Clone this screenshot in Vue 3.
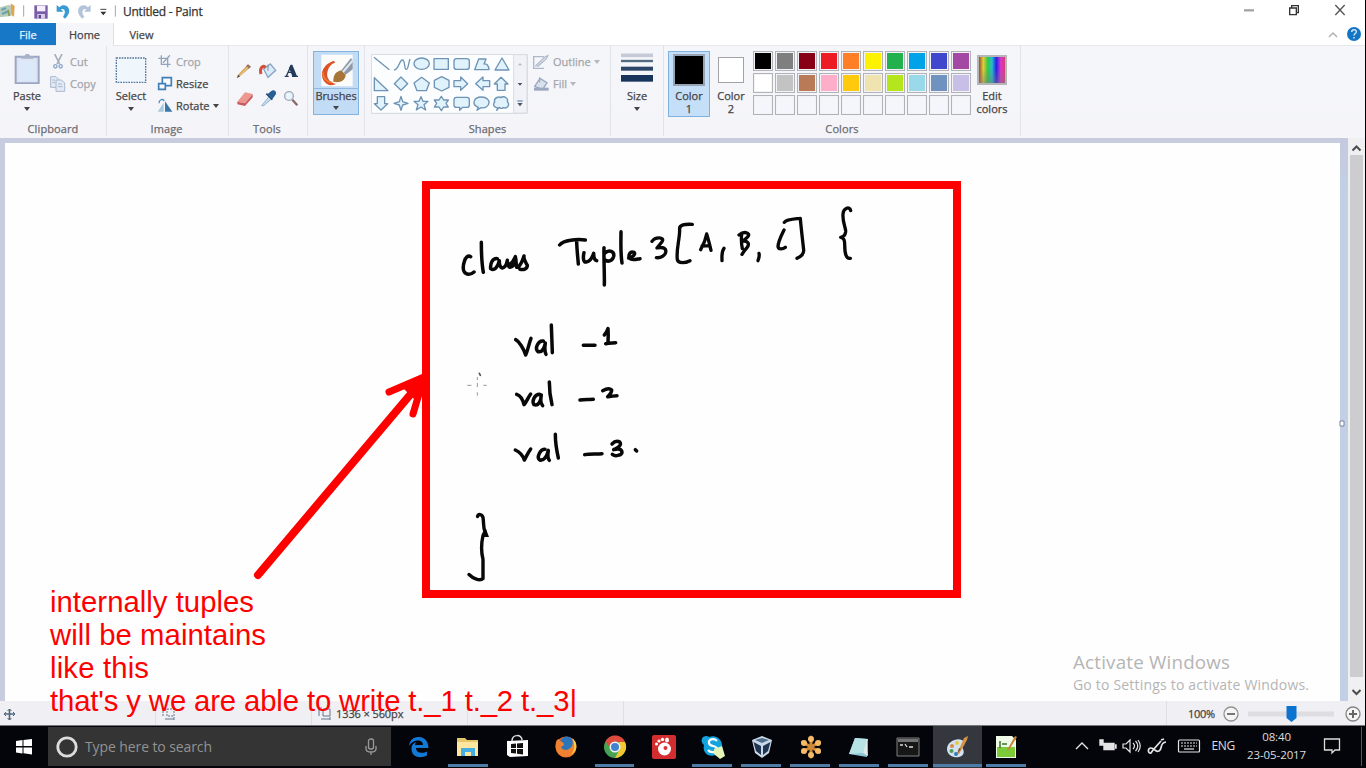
<script setup>
const row1 = ['#000000', '#7f7f7f', '#880015', '#ed1c24', '#ff7f27', '#fff200', '#22b14c', '#00a2e8', '#3f48cc', '#a349a4']
const row2 = ['#ffffff', '#c3c3c3', '#b97a57', '#ffaec9', '#ffc90e', '#efe4b0', '#b5e61d', '#99d9ea', '#7092be', '#c8bfe7']
const swatches = [...row1, ...row2, ...Array(10).fill('#f5f6fb')]
const apps = [
  { id: 'edge' }, { id: 'explorer', open: true }, { id: 'store' }, { id: 'firefox' },
  { id: 'chrome', open: true }, { id: 'gom' }, { id: 'skype', open: true }, { id: 'vbox', open: true },
  { id: 'flower', open: true }, { id: 'notepad', open: true }, { id: 'cmd', open: true },
  { id: 'paint', open: true, active: true }, { id: 'npp', open: true }
]
</script>

<template>
  <div class="screen">
    <header class="titlebar">
      <svg class="quick" width="120" height="23" viewBox="0 0 360 69">
        <path d="M0 22l28-8 12 10-8 24-32 4z" fill="#b9cbb9" /><path d="M4 30l14-6M6 42l18-8" stroke="#6ba3b5" stroke-width="7" /><path d="M32 10l12 8-2 32-8-4z" fill="#e0a552" /><path d="M24 30l4 18" stroke="#8c9a52" stroke-width="5" />
        <path d="M71 16v34" stroke="#a6a6a6" stroke-width="3" />
        <path d="M103 16h40v40h-40z" fill="#7b5ca8" /><path d="M111 17h25v17h-25z" fill="#f5effb" /><path d="M112 42h23v14h-23z" fill="#d8cde6" /><path d="M116 45h7v10h-7z" fill="#5f4590" />
        <path d="M170 15v20h20l-7-7c12-4 16 10 6 22l6 6c20-16 16-42-8-40l-9 6z" fill="#3a9ad4" />
        <path d="M272 15v20h-20l7-7c-12-4-16 10-6 22l-6 6c-20-16-16-42 8-40l9 6z" fill="#b4c4d8" />
        <path d="M301 28h18" stroke="#444" stroke-width="3" /><path d="M301 35h18l-9 11z" fill="#333" />
        <path d="M346 16v34" stroke="#a6a6a6" stroke-width="3" />
      </svg>
      <span class="title">Untitled - Paint</span>
      <svg class="winctl" width="125" height="23" viewBox="0 0 375 69" fill="none">
        <path d="M12 31h30" stroke="#a5a5a5" stroke-width="7" />
        <path d="M149 24h20v20h-20zM155 23v-6h20v21h-6" stroke="#333" stroke-width="4" />
        <path d="M286 15l28 30M314 15l-28 30" stroke="#555" stroke-width="4" />
      </svg>
    </header>
    <nav class="tabs">
      <span class="tab file">File</span><span class="tab home">Home</span><span class="tab view">View</span>
      <svg class="help" width="40" height="22" viewBox="0 0 40 22"><path d="M3 14l4-4 4 4" fill="none" stroke="#b2b2b2" stroke-width="1.5" /><circle cx="28" cy="11" r="7" fill="#1475c5" /><path d="M25.7 9c0-3 5-3 4.600 0-.2 1.500-2.300 1.600-2.300 3.500M28 14v1.500" fill="none" stroke="#c9e6fb" stroke-width="1.500" /></svg>
    </nav>

    <section class="ribbon">
      <div class="group clip">
        <div class="body">
          <div class="big paste">
            <svg width="26" height="32" viewBox="42 156 78 96"><path d="M47 170h69v80H47z" fill="#dce4f2" stroke="#9ba7c2" stroke-width="6" /><path d="M56 182h50v60H56z" fill="#dce9f8" /><path d="M64 176v-8h10c0-8 16-8 16 0h10v8z" fill="#a8b2c8" /></svg>
            <span class="t">Paste</span><i class="arr"></i>
          </div>
          <div class="rows">
            <div class="row dim"><svg width="16" height="16" viewBox="152 162 48 48" fill="none"><path d="M166 162l15 30M188 162l-15 30" stroke="#a3adba" stroke-width="5" /><circle cx="168" cy="199" r="5" stroke="#8ca6c9" stroke-width="4" /><circle cx="184" cy="199" r="5" stroke="#8ca6c9" stroke-width="4" /></svg><span>Cut</span></div>
            <div class="row dim"><svg width="16" height="16" viewBox="152 228 48 48" fill="#e4eaf5" stroke="#a9b8cf" stroke-width="3"><path d="M154 230h16l8 8v24h-24z" /><path d="M170 240h17l9 9v25h-26z" /><path d="M176 252h12M176 260h14M159 240h8M159 248h8" /></svg><span>Copy</span></div>
          </div>
        </div>
        <div class="name">Clipboard</div>
      </div>

      <div class="group image">
        <div class="body">
          <div class="big select">
            <svg width="32" height="32" viewBox="348 156 96 96"><path d="M352 174h88v73h-88z" fill="#eff6fc" stroke="#55779b" stroke-width="4" stroke-dasharray="5 3" /></svg>
            <span class="t">Select</span><i class="arr"></i>
          </div>
          <div class="rows">
            <div class="row dim"><svg width="16" height="16" viewBox="470 162 48 48" fill="none" stroke="#92a5be" stroke-width="4"><path d="M474 175h28v27M483 166v27h28M488 188l21-22" /></svg><span>Crop</span></div>
            <div class="row"><svg width="16" height="16" viewBox="470 228 48 48" fill="#f5fbff" stroke="#407fb5" stroke-width="5"><path d="M486 233h27v24h-27z" /><path d="M475 251h20v17h-20z" /></svg><span>Resize</span></div>
            <div class="row"><svg width="16" height="16" viewBox="470 294 48 48"><path d="M494 304v31h22z" fill="#3777a9" /><path d="M490 308v27h-18z" fill="#a8c9de" /><path d="M476 310c0-12 10-14 16-8" fill="none" stroke="#4592be" stroke-width="4" /></svg><span>Rotate</span><i class="arr"></i></div>
          </div>
        </div>
        <div class="name">Image</div>
      </div>

      <div class="group tools">
        <div class="body">
          <svg width="64" height="48" viewBox="708 186 192 144">
            <path d="M713 226l31-33 9 7-33 29-10 5z" fill="#d7a354" /><path d="M744 193l9 7-7 6-8-7z" fill="#9a7670" /><path d="M711 234l4-9 5 4z" fill="#48443d" /><path d="M720 226l23-24" stroke="#f1d69c" stroke-width="3" />
            <path d="M791 207l20-15 16 19-23 21z" fill="#d9eafb" stroke="#8ba6c6" stroke-width="4" /><path d="M783 222c-5-19 5-27 14-20" fill="none" stroke="#d35036" stroke-width="9" /><path d="M804 194v18" stroke="#7889a3" stroke-width="3" />
            <path d="M854 229h12M876 229h18M859 229l14-32M864 217h18" fill="none" stroke="#263c57" stroke-width="4" /><path d="M872 194h5l14 35h-14l-10-25z" fill="#213b59" />
            <path d="M712 305l23-28 23 5-23 28z" fill="#ed9791" /><path d="M712 305l23 5 23-28v10l-23 26-23-5z" fill="#c95b5c" />
            <path d="M785 317l25-31 8 8-27 23z" fill="#c2dff2" stroke="#7797b3" stroke-width="2" /><path d="M803 282l15 14 10-14c2-9-8-15-15-8z" fill="#285d95" /><path d="M799 281l18 18" stroke="#214977" stroke-width="5" />
            <circle cx="867" cy="288" r="13" fill="#e8f5fe" stroke="#9da7b4" stroke-width="4" /><path d="M877 299l15 17" stroke="#8b6864" stroke-width="7" />
          </svg>
        </div>
        <div class="name">Tools</div>
      </div>

      <div class="group brush">
        <div class="active-btn">
          <svg width="45" height="36" viewBox="39 18 135 108"><path d="M61 26h94v95H61z" fill="#fbfbfa" /><path d="M99 44C65 55 53 86 72 109c10 12 25 9 33 5-20-4-31-20-25-39 3-13 11-22 22-25z" fill="#dc5126" /><path d="M65 79c2 17 12 29 29 31" fill="none" stroke="#f27a38" stroke-width="5" /><path d="M97 107c-1-22 10-31 24-34l13 13c-1 18-19 26-37 21z" fill="#a87538" /><path d="M121 73l29-37 5 8v26l-21 16z" fill="#8e9aaa" /><path d="M126 78l29-34" stroke="#e3e7eb" stroke-width="6" /></svg>
          <span class="t">Brushes</span><i class="arr"></i>
        </div>
      </div>

      <div class="group shapes">
        <div class="body">
          <svg width="157" height="60" viewBox="213 27 471 180" fill="#e0f2fb" stroke="#6f93b4" stroke-width="4" stroke-linejoin="round">
            <path d="M214 28h468v177H214z" fill="#fcfdff" stroke="#d2d7df" stroke-width="3" /><path d="M641 29h40v175h-40z" fill="#f1f2f7" stroke="#d9dce3" stroke-width="3" />
            <path d="M222 37l46 37" /><path d="M282 75c15-2 16-30 25-30 10 0 4 28 12 28 6 0 7-22 11-31" fill="none" />
            <ellipse cx="365" cy="56" rx="23" ry="17" /><path d="M402 41h43v32h-43z" /><rect x="462" y="41" width="46" height="32" rx="8" />
            <path d="M524 74l12-32h22l-6 15c8-1 14 3 15 17z" /><path d="M606 39l21 36h-42z" />
            <path d="M223 98v39h41z" /><path d="M303 96l20 20-20 20-20-20z" /><path d="M365 97l23 17-9 23h-28l-9-23z" /><path d="M425 95l22 11v21l-22 11-22-11v-21z" />
            <path d="M462 107h20V96l21 20-21 20v-11h-20z" /><path d="M569 107h-20V96l-22 20 22 20v-11h20z" /><path d="M603 97l21 20h-9v19h-23v-19h-9z" />
            <path d="M232 155h22v21h9l-20 19-20-19h9z" /><path d="M303 154l5 16 16 5-16 5-5 16-5-16-16-5 16-5z" />
            <path d="M363 155l6 14h15l-12 10 5 16-14-9-14 9 5-16-12-10h15z" /><path d="M424 154l7 11h14l-7 10 7 11h-14l-7 11-7-11h-14l7-11-7-10h14z" />
            <path d="M469 157h32q7 0 7 8v14q0 8-7 8h-13l-9 9v-9h-10q-7 0-7-8v-14q0-8 7-8z" /><path d="M535 187c-22-8-14-31 9-31 34 0 28 37-2 32l-11 8z" /><path d="M594 189c-20-4-12-16-10-17-4-17 16-17 18-14 12-8 24 4 20 12 9 9 0 22-12 18-5 3-10 2-12-1l-8 9z" />
            <path d="M654 61h12l-6-7z" fill="#aeb5bf" stroke="none" /><path d="M653 114h14l-7 8zM652 174h16l-8 10z" fill="#4b5360" stroke="none" /><path d="M652 168h16" />
          </svg>
          <div class="rows">
            <div class="row dim"><svg width="16" height="16" viewBox="700 29 48 48" fill="none" stroke="#aeb8c9" stroke-width="4"><path d="M733 37h-31v35h31M707 66l29-28 8-4-4 9-27 24" /></svg><span>Outline</span><i class="arr"></i></div>
            <div class="row dim"><svg width="16" height="16" viewBox="700 95 48 48"><path d="M705 126l16-24 21 13-13 20z" fill="#d8e0ec" stroke="#9ba8c1" stroke-width="4" /><path d="M703 130h44v9h-44z" fill="#9ba9bf" /><path d="M720 115V98" stroke="#9ba8c1" stroke-width="3" /></svg><span>Fill</span><i class="arr"></i></div>
          </div>
        </div>
        <div class="name">Shapes</div>
      </div>

      <div class="group size">
        <div class="big">
          <svg width="34" height="34" viewBox="59 21 102 102"><path d="M62 31h96" stroke="#c5cad6" stroke-width="11" /><path d="M62 48h96" stroke="#536b80" stroke-width="7" /><path d="M62 71h96" stroke="#2c4668" stroke-width="12" /><path d="M62 100h96" stroke="#19345a" stroke-width="20" /></svg>
          <span class="t">Size</span><i class="arr"></i>
        </div>
      </div>

      <div class="group colors">
        <div class="body">
          <div class="col one"><b class="chip black"></b><span class="t">Color</span><span class="t two">1</span></div>
          <div class="col"><b class="chip"></b><span class="t">Color</span><span class="t two">2</span></div>
          <div class="palette"><i v-for="(c, i) in swatches" :key="i" :style="{ background: c }"></i></div>
          <div class="col edit"><b class="rainbow"></b><span class="t">Edit</span><span class="t two">colors</span></div>
        </div>
        <div class="name">Colors</div>
      </div>
    </section>

    <main class="work">
      <div class="paper"></div><div class="gutter"></div>
      <div class="scroll">
        <svg width="16" height="12" viewBox="0 0 16 12"><path d="M4.500 8.500l4-4 4 4" fill="none" stroke="#4c4c4c" stroke-width="2" /></svg>
        <div class="thumb"></div>
        <svg width="16" height="24" viewBox="0 0 16 24"><path d="M4.500 13l4 4 4-4" fill="none" stroke="#4c4c4c" stroke-width="2" /></svg>
      </div>
    </main>

    <footer class="status">
      <div class="cell c0"><svg width="14" height="14" viewBox="0 0 14 14" stroke="#51677c" fill="none"><path d="M2 7h11M7.500 2v11" stroke-width="1.600" /><path d="M4 5L2 7l2 2M11 5l2 2-2 2M5.500 4l2-2 2 2M5.500 11l2 2 2-2" /></svg></div>
      <div class="cell"><svg width="14" height="14" viewBox="0 0 14 14" stroke="#60768f" fill="none"><path d="M1 9V1M1 1h3M5 2h7v7H5z" stroke-dasharray="2 1" /><path d="M3 12h9M12 10v3" /></svg></div>
      <div class="cell"><svg width="14" height="14" viewBox="0 0 14 14" stroke="#60768f" fill="none"><path d="M1 9V1M1 1h3M5 2h7v7H5z" /><path d="M3 12h9M12 10v3" /></svg><span class="dims">1336 × 560px</span></div>
      <div class="cell"></div>
      <div class="cell wide-cell"></div>
      <div class="zoomer">
        <span>100%</span>
        <svg width="142" height="24" viewBox="0 0 142 24"><circle cx="9" cy="12" r="7" fill="#f5f5f5" stroke="#929292" stroke-width="1.300" /><path d="M5 12h8" stroke="#777" stroke-width="2" /><path d="M26 12h86" stroke="#dedee2" stroke-width="5" /><path d="M64.500 4h10v12l-5 4-5-4z" fill="#0b74d1" /><circle cx="131" cy="12" r="7" fill="#f5f5f5" stroke="#858585" stroke-width="1.300" /><path d="M127 12h8M131 8v8" stroke="#666" stroke-width="2" /></svg>
      </div>
    </footer>

    <div class="taskbar">
      <div class="start"><svg width="18" height="18" viewBox="0 0 18 18" fill="#fff"><path d="M1 3l6.500-1v6H1zM8.500 2L17 1v7H8.500zM1 9.500h6.500v6L1 14.500zM8.500 9.500H17v7l-8.500-1.200z" /></svg></div>
      <div class="search">
        <svg width="22" height="22" viewBox="0 0 22 22"><circle cx="11" cy="11" r="9.200" fill="none" stroke="#ddd" stroke-width="2.800" /></svg>
        <span>Type here to search</span>
        <svg class="mic" width="14" height="20" viewBox="0 0 14 20" fill="none" stroke="#999" stroke-width="1.300"><rect x="4.500" y="2" width="5" height="10" rx="2" /><path d="M2 9v3c0 4 10 4 10 0V9M7 15v3" /></svg>
      </div>
      <div class="apps">
        <div v-for="a in apps" :key="a.id" class="app" :class="{ open: a.open, active: a.active }">
          <svg width="26" height="26" viewBox="0 0 26 26">
            <g v-if="a.id === 'edge'"><path d="M3 12C4 5 8 3 13 3c6 0 9.500 5 9.500 11H10c0 5 7 6 11 3.500v4c-7 3.500-15.500 1.500-15.500-6.500 0-4 2-6 5-7-1 1-1.500 2-1.500 3h8c0-6-10-6-14 1z" fill="#1479d4" /></g>
            <g v-else-if="a.id === 'explorer'"><path d="M2 4h8l2 2h11v16H2z" fill="#e7c66b" /><path d="M2 8h21v14H2z" fill="#ffe7a0" /><path d="M6 14h14v8h-4v-4h-6v4H6z" fill="#45aee2" /></g>
            <g v-else-if="a.id === 'store'"><path d="M3 7l21-1v16l-18 1-3-2z" fill="#fff" /><path d="M8 7c0-7 10-7 10-1" fill="none" stroke="#ddd" stroke-width="1.500" /><path d="M7 10l5-.5v4.500H7zM13 9.400l6-.4v5h-6zM7 15h5v4.500L7 19zM13 15h6v5.500l-6-.7z" fill="#111" /></g>
            <g v-else-if="a.id === 'firefox'"><circle cx="13" cy="13" r="10.500" fill="#e86528" /><circle cx="14" cy="10" r="7.500" fill="#2c75b8" /><path d="M3 8c1-3 3-3 3-3 0 3 5 2 5 6l-3 2c2 5 9 3 11-1 2-4 0-7-1-8 8 5 6 19-5 19C6 23 1 16 3 8z" fill="#ef8130" /><path d="M19 4c7 5 5 14-1 17 4-5 4-11 1-17z" fill="#ffc847" /></g>
            <g v-else-if="a.id === 'chrome'"><circle cx="13" cy="13" r="11" fill="#46a353" /><path d="M3.500 7.500C8-1 20 0 23 8H13l-4 7z" fill="#dd4b3e" /><path d="M23 8c4 8-3 16-10 16l5-9-1-7z" fill="#f4c830" /><circle cx="13" cy="13" r="5.500" fill="#f3f3f3" /><circle cx="13" cy="13" r="4" fill="#4283d0" /></g>
            <g v-else-if="a.id === 'gom'"><rect x="1" y="1" width="24" height="24" rx="2" fill="#d42d30" /><ellipse cx="13.500" cy="15" rx="6.500" ry="6.500" fill="#fff" /><g fill="#fff"><circle cx="5.500" cy="10" r="1.500" /><circle cx="8" cy="7" r="1.600" /><circle cx="11.500" cy="5.500" r="1.700" /><ellipse cx="16" cy="6" rx="2" ry="2.600" /></g><circle cx="14.500" cy="14" r="2" fill="#dc3339" /></g>
            <g v-else-if="a.id === 'skype'"><path d="M3 3c4-2 6 0 6 0 8-3 14 4 13 10 3 5-2 9-6 8C8 24 2 18 4 11 1 8 1 6 3 3z" fill="#13a3df" /><path d="M17 7c-3-3-9-2-8 2 0 4 8 2 8 6 0 4-7 4-9 1" fill="none" stroke="#fff" stroke-width="2.300" /><path d="M14 15l8-3 3 10-5 3-6-5z" fill="#e5f5b7" /></g>
            <g v-else-if="a.id === 'vbox'"><path d="M3 6l10-4 10 4-3 13-7 5-7-5z" fill="#cbd8e8" /><path d="M4.500 8l7.500 4v9l-5-4zM21.500 8L14 12v9l5-4z" fill="#1f3551" /><path d="M6 6l7-2 7 2-7 3z" fill="#506d8a" /></g>
            <g v-else-if="a.id === 'flower'"><path d="M13 3v20M4.500 8l17 10M4.500 18l17-10" stroke="#ce8937" stroke-width="3" stroke-linecap="round" /><g fill="#f6ba67"><circle cx="13" cy="5" r="3" /><circle cx="13" cy="21" r="3" /><circle cx="6" cy="9" r="3" /><circle cx="20" cy="9" r="3" /><circle cx="6" cy="17" r="3" /><circle cx="20" cy="17" r="3" /></g></g>
            <g v-else-if="a.id === 'notepad'"><path d="M9 4l13 1-1 18-18-3z" fill="#8cc6d3" /><path d="M9 4l13 1-5 14-14 1z" fill="#b7e3e7" /><path d="M21 5l1 17-5-3z" fill="#e2e9e9" /></g>
            <g v-else-if="a.id === 'cmd'"><path d="M2 4h22v18H2z" fill="#171717" stroke="#808080" /><path d="M3 5h20v3H3z" fill="#747474" /><path d="M5 11h3M10 10l2 3M14 13h4" stroke="#ddd" stroke-width="1.300" /></g>
            <g v-else-if="a.id === 'paint'"><path d="M3 15C3 6 17 2 20 8c2 4-3 4-1 7 3 7-4 9-9 8-4-1-7-4-7-8z" fill="#d3e2ee" /><circle cx="8" cy="12" r="2" fill="#d5894f" /><circle cx="13" cy="9" r="2" fill="#e8c744" /><circle cx="7.500" cy="17" r="2" fill="#4b9c57" /><circle cx="12" cy="20" r="2" fill="#347abc" /><path d="M13 20l7-16 4-2-1 4-8 14z" fill="#d69442" /><path d="M13 20l2-6 2 1z" fill="#7b533c" /></g>
            <g v-else><path d="M3 2h16l4 4v18H3z" fill="#effbe8" /><path d="M4 13h18v10H4z" fill="#7dcb39" /><path d="M7 7v7M9 10h5" stroke="#38702f" stroke-width="1.500" /><path d="M14 16l8-14 2 1-8 13z" fill="#c88635" /></g>
          </svg>
        </div>
      </div>
      <svg class="tray" width="152" height="24" viewBox="0 0 152 24" fill="none" stroke="#e4e4e4" stroke-width="1.400">
        <path d="M18 15l6-6 6 6" /><path d="M46 9.500v6h10v-6zM42 6v5h3V6zM57 11h1v3h-1" fill="#e4e4e4" /><path d="M65 10h3l4-4v12l-4-4h-3zM75 9c2 2 2 4 0 6M77.500 7c3 3 3 7 0 10M80 6c3 4 3 8 0 12" stroke-width="1.200" />
        <path d="M103 7l-8 9-2 3c-3 1-4-5 0-5s4 5 8 3 0-8 7-9M103 6l3-1" stroke-width="1.700" /><rect x="120.500" y="6" width="21" height="12" rx="1" stroke-width="1.200" /><path d="M123 9h16M123 12h16" stroke-dasharray="2 1" stroke-width="1.200" /><path d="M126 15h10" stroke-width="1.200" />
      </svg>
      <span class="lang">ENG</span>
      <div class="clock"><span>08:40</span><span>23-05-2017</span></div>
      <svg class="action" width="18" height="20" viewBox="0 0 18 20"><path d="M1.500 3h15v11H12l-3 3v-3H1.500z" fill="none" stroke="#ddd" stroke-width="1.300" /></svg>
      <div class="peek"></div>
    </div>

    <div class="edge"></div>

    <svg class="ink" width="1366" height="768" viewBox="0 0 1366 768" fill="none">
      <g transform="translate(440 190) scale(.33333)" stroke="#080808" stroke-width="10.500" stroke-linecap="round" stroke-linejoin="round">
        <path d="M92 200C75 190 66 231 72 244c7 12 20 11 30 2M124 157c0 31 1 62 6 90M172 206c-14-2-22 14-20 30 11 8 22-6 26-24 0 12 2 20 9 22 9-2 13-12 15-23 0 12 2 20 8 21 10-2 16-12 18-22M210 222c8-4 12-14 16-22 3 12 2 22 4 32M234 232c8-8 14-20 18-34-2 12 6 20 10 28 0 12-12 14-22 12" />
        <path d="M359 165c12-15 51-18 77-15M410 149c0 25 3 48 5 73M432 188c-4 18-1 30 7 28 13-2 18-14 22-26 0 12 2 20 9 22M492 173c-1 38 2 83 1 112M494 190c14-14 30-4 27 9-4 15-18 18-27 10M543 125c0 33-2 62 3 94M566 204c13-2 21-12 16-17-12-5-17 8-14 17 5 9 20 4 32 2" />
      </g>
      <g transform="translate(640 190) scale(.33333)" stroke="#080808" stroke-width="10" stroke-linecap="round" stroke-linejoin="round">
        <path d="M36 154c9-14 40-14 30 1L51 174c41-10 30 32-2 29M157 103c-21-1-41 0-38 17 0 28-11 60-7 89 3 13 25 10 38 3M182 179c8-14 15-31 18-47 4 12 9 32 13 49M186 168l23-1M252 175c-8 11-6 23-6 37" />
        <path d="M305 132c-2 18-1 29 2 44M297 135c17-14 35-5 27 4-5 8-15 12-17 15 16-3 24 8 13 20-5 5-9 11-14 19M357 190c2 8 0 15-3 22M432 120c-8 16-18 39-18 50 2 10 15 7 22 2M433 97c7-10 29-10 48-12 2 27 7 66 10 95 1 13-7 19-20 25M632 62c-3-15-22-7-23 10-2 27 9 41 8 53-2 14-9 16-15 17 20 3 7 31 16 54 2 6 6 10 13 9" />
      </g>
      <g transform="translate(450 310) scale(.33333)" stroke="#080808" stroke-width="10.500" stroke-linecap="round" stroke-linejoin="round">
        <path d="M197 89c10 5 24 26 30 46 6-12 9-32 16-50M280 93c-15-3-27 22-16 32 14 3 19-12 22-26-2 13-1 28 2 34M304 45c1 28 2 56 3 83M400 106h35M463 75c5-5 9-13 11-19 1 12 1 26 0 41M467 101c10-2 19-2 30-3" />
        <path d="M200 253c12 4 19 18 22 31 8-8 12-22 20-32M269 253c-16 0-24 21-17 31 15 5 21-14 22-29-3 13-2 25 4 32M298 216c0 24 3 48 8 68M390 270c13-3 27-1 40-2M458 242c13-7 21-8 27-2 1 7-6 14-12 20 11 0 18-3 28-3" />
        <path d="M196 420c13 6 23 18 27 30 7-12 11-22 19-33M285 418c-15 0-26 24-16 32 15 3 22-13 26-29-2 14-3 24 3 30M316 373c0 25 4 49 9 71M404 434c17-4 35-1 52-3M486 402c13-14 31-7 24 4-5 8-13 10-19 13 29-8 32 15 13 17-7 2-12 1-17-3M556 419l4 4" />
        <path d="M53 226h10M101 226h8M82 202v7M82 220v10M82 248v8" stroke="#999" stroke-width="3" /><path d="M88 190l3 6" stroke="#555" stroke-width="5" />
      </g>
      <path d="M477.500 516.500c1-3 4.500-2.500 5.500 1 1 6 0 10 2 14l-2 4c-2 9-2 16 0 24v19c-3 3-10 0-14-4" stroke="#080808" stroke-width="3.400" stroke-linecap="round" stroke-linejoin="round" /><path d="M483 530l3-1 3 8h-5z" fill="#080808" />
      <path d="M1340 421h4v5h-4z" fill="#fff" stroke="#74849d" />
      <path d="M426 185h531v409H426z" stroke="#f00" stroke-width="8" /><path d="M258 575L415 389" stroke="#f00" stroke-width="8" stroke-linecap="round" /><path d="M389 392l35-15-11 37" stroke="#f00" stroke-width="7" stroke-linecap="round" stroke-linejoin="round" /><path d="M404 389l19-11-9 21z" fill="#f00" />
      <g class="note">
        <text x="50" y="612" textLength="204">internally tuples</text>
        <text x="50" y="645" textLength="216">will be maintains</text>
        <text x="50" y="678" textLength="99">like this</text>
        <text x="50" y="711" textLength="527">that's y we are able to write t._1 t._2 t._3|</text>
      </g>
      <g class="activate"><text x="1073" y="668.500" textLength="157" font-size="18.800">Activate Windows</text><text x="1073" y="689.500" textLength="236" font-size="14">Go to Settings to activate Windows.</text></g>
    </svg>
  </div>
</template>

<style>
body { margin: 0; overflow: hidden; }
</style>
<style scoped>
.screen { position: relative; width: 1366px; height: 768px; overflow: hidden; background: #fff; display: flex; flex-direction: column; font: 11px/14px "Open Sans", "Noto Sans", sans-serif; color: #444; -webkit-text-stroke: .25px; }
.screen svg { display: block; flex: none; }
.titlebar { height: 23px; display: flex; align-items: center; background: #fff; }
.title { font-size: 12px; color: #333; margin-left: 3px; letter-spacing: -.25px; white-space: nowrap; padding-top: 1px; }
.winctl { margin-left: auto; margin-right: 1px; }
.tabs { height: 23px; display: flex; align-items: stretch; background: #fff; box-sizing: border-box; border-bottom: 1px solid #e6e6ec; }
.tab { text-align: center; line-height: 23px; box-sizing: border-box; }
.file { width: 56px; background: #1778c8; color: #e5f4ff; }
.home { width: 58px; height: 23px; background: #f5f6fa; border-right: 1px solid #dedfe5; }
.view { width: 55px; }
.help { margin-left: auto; }
.ribbon { height: 92px; background: linear-gradient(#f5f6fa, #f4f4f9); display: flex; flex: none; }
.group { position: relative; box-sizing: border-box; border-right: 1px solid #e1e3e9; height: 90px; flex: none; display: flex; flex-direction: column; justify-content: space-between; }
.body { display: flex; }
.name { text-align: center; color: #6b6b70; line-height: 14px; letter-spacing: .1px; }
.clip { width: 107px; } .image { width: 122px; } .tools { width: 79px; } .brush { width: 57px; } .shapes { width: 246px; } .size { width: 53px; } .colors { width: 357px; }
.big { display: flex; flex-direction: column; align-items: center; padding-top: 6px; flex: none; }
.big .t { margin-top: 5px; }
.paste { width: 50px; padding-left: 2px; }
.select { width: 48px; }
.arr { width: 0; height: 0; flex: none; border: 3px solid transparent; border-top: 4px solid #444; border-bottom: 0; }
.big .arr { margin-top: 4px; }
.rows { padding-top: 5px; }
.row { height: 22px; display: flex; align-items: center; white-space: nowrap; }
.row span { margin-left: 4px; }
.row .arr { margin-left: 3px; }
.dim { color: #a3a5aa; }
.dim .arr { border-top-color: #b4b7bf; }
.clip .rows { margin-left: -2px; }
.image .rows { margin-left: 2px; }
.image .row span { margin-left: 3px; }
.image .name { padding-right: 2px; }
.tools .body { padding: 16px 0 0 7px; }
.tools .name { padding-right: 2px; }
.active-btn { margin: 5px 0 0 5px; width: 46px; height: 64px; box-sizing: border-box; border: 1px solid #84b3de; background: #c3dcf6; display: flex; flex-direction: column; align-items: center; }
.active-btn svg { border-bottom: 1px solid #91b9df; }
.active-btn .t { margin-top: 0; letter-spacing: -.1px; }
.active-btn .arr { margin-top: 3px; }
.shapes .body > svg { margin: 8px 5px 0 6px; }
.size .big .t { margin-top: 3px; }
.colors .body { padding: 5px 0 0 4px; }
.col { width: 42px; height: 66px; box-sizing: border-box; display: flex; flex-direction: column; align-items: center; }
.one { background: #c5dff8; border: 1px solid #7fb1df; }
.chip { box-sizing: border-box; width: 26px; height: 26px; margin: 6px 0 6px; border: 1px solid #a2a2a7; background: #fff; box-shadow: inset 0 0 0 1px #fff; }
.black { width: 32px; height: 32px; margin: 2px 0 3px; background: #000; border: 2px solid #96a4b6; box-shadow: none; }
.col .two { line-height: 12px; }
.palette { display: grid; grid-template-columns: repeat(10, 20px); grid-template-rows: repeat(3, 20px); gap: 2px; margin-left: 1px; }
.palette i { box-sizing: border-box; border: 1px solid #b2b3b9; box-shadow: inset 0 0 0 1px #f3f3f5; }
.rainbow { width: 26px; height: 26px; margin: 4px 0 4px; border: 2px solid #b4b6ba; background: linear-gradient(180deg, transparent 45%, #7777), linear-gradient(90deg, #9e4b34, #e1cf36, #31c947, #22bbd0, #291ee0, #d637ce, #df3b70); }
.work { height: 563px; flex: none; display: flex; background: #c7ccdf; box-sizing: border-box; padding: 0 1px 0 5px; }
.paper { width: 1335px; margin-top: 5px; background: #fefefe; flex: none; }
.gutter { width: 8px; background: linear-gradient(#c5cade, #c2cfe4 50px); }
.scroll { width: 17px; background: #f0f0f3; display: flex; flex-direction: column; justify-content: space-between; padding-top: 4px; box-sizing: border-box; }
.thumb { width: 13px; margin: 1px 0 0 2px; flex: 1; background: #cdcdd0; }
.status { height: 25px; flex: none; display: flex; background: #f0eff3; border-bottom: 1px solid #777; box-sizing: border-box; }
.cell { width: 156px; border-right: 1px solid #dedee3; box-sizing: border-box; display: flex; align-items: center; padding: 1px 0 0 6px; }
.c0 { padding-left: 2px; }
.wide-cell { width: 543px; }
.dims { margin-left: 4px; letter-spacing: -.1px; }
.zoomer { display: flex; align-items: center; padding: 1px 0 0 21px; }
.zoomer span { width: 34px; letter-spacing: -.3px; }
.taskbar { flex: none; height: 42px; background: #04050b; display: flex; align-items: stretch; color: #ddd; -webkit-text-stroke: 0; }
.start { width: 48px; display: flex; align-items: center; justify-content: center; }
.search { width: 343px; margin: 1px 0 2px; background: #343434; display: flex; align-items: center; padding-left: 8px; box-sizing: border-box; }
.search span { font-size: 14px; color: #929292; margin-left: 7px; letter-spacing: -.1px; white-space: nowrap; }
.mic { margin: 0 13px 0 auto; }
.apps { display: flex; margin-left: 4px; }
.app { width: 48.9px; display: flex; align-items: center; justify-content: center; box-sizing: border-box; padding-bottom: 1px; position: relative; }
.app.open::after { content: ""; position: absolute; bottom: 1px; left: 4px; right: 5px; height: 3px; background: #4f7ca7; }
.app.active { background: #34373e; }
.app.active::after { left: 0; right: 0; }
.tray { margin: 8px 0 0 27px; }
.lang { width: 25px; line-height: 40px; font-size: 12px; letter-spacing: -.4px; margin-left: 2px; }
.clock { display: flex; flex-direction: column; width: 72px; margin-left: 4px; padding-top: 2px; line-height: 18px; font-size: 11.500px; text-align: center; letter-spacing: -.1px; }
.tray, .lang, .clock { flex: none; }
.action { margin: 10px 0 0 10px; }
.peek { width: 1px; margin: 1px 0 2px 20px; background: #55565a; }
.edge { position: absolute; right: 0; top: 0; width: 1px; height: 768px; background: #000; }
.ink { position: absolute; left: 0; top: 0; -webkit-text-stroke: 0; }
.note { font: 29.300px "Liberation Sans", Arial, sans-serif; fill: #f00; }
.activate { font-family: "Open Sans", "Noto Sans", sans-serif; fill: #b5b5b5; }
</style>
